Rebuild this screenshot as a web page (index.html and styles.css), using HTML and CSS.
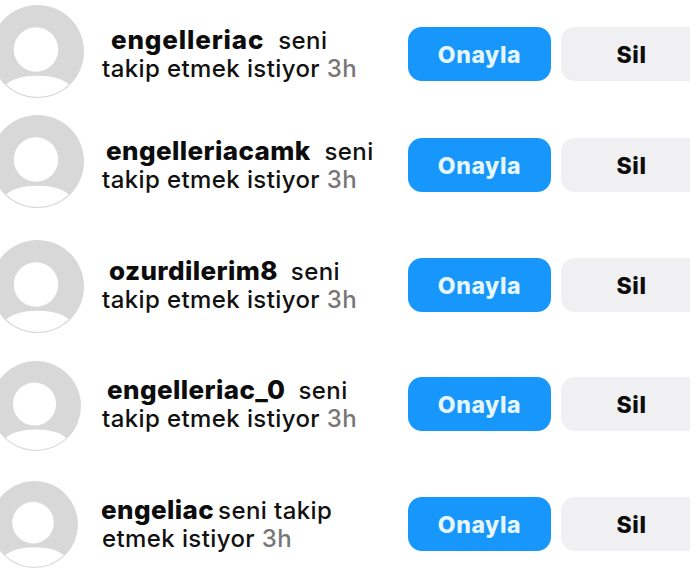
FILE: index.html
```html
<!DOCTYPE html>
<html lang="en">
<head>
    <meta charset="UTF-8">
    <meta name="viewport" content="width=device-width, initial-scale=1.0">
    <title>Takip istekleri</title>
    <link rel="stylesheet" href="styles.css">
</head>
<body>
    <svg class="icon-defs">
        <symbol id="avatar-icon" viewBox="0 0 92 92">
            <circle class="avatar-bg" cx="46" cy="46" r="46"/>
            <circle class="avatar-cut" cx="44.5" cy="44" r="22"/>
            <path class="avatar-cut" d="M15 78.6 C21 73 32 70 46 70 C60 70 71 73 77 78.6 A45 45 0 0 1 15 78.6 Z"/>
        </symbol>
    </svg>

    <div class="request-list">
        <div class="request-row row-1">
            <svg class="avatar avatar-lg avatar-up-2"><use href="#avatar-icon"/></svg>
            <div class="request-text">
                <div class="line-top indent-9"><span class="username username-wide">engelleriac</span><span class="seni">seni</span></div>
                <div class="line-bottom">takip etmek istiyor <span class="time">3h</span></div>
            </div>
            <button class="confirm-btn">Onayla</button>
            <button class="delete-btn">Sil</button>
        </div>
        <div class="request-row row-2">
            <svg class="avatar avatar-lg avatar-up-3"><use href="#avatar-icon"/></svg>
            <div class="request-text">
                <div class="line-top indent-4"><span class="username">engelleriacamk</span><span class="seni">seni</span></div>
                <div class="line-bottom">takip etmek istiyor <span class="time">3h</span></div>
            </div>
            <button class="confirm-btn">Onayla</button>
            <button class="delete-btn">Sil</button>
        </div>
        <div class="request-row row-3">
            <svg class="avatar avatar-lg avatar-down-1"><use href="#avatar-icon"/></svg>
            <div class="request-text">
                <div class="line-top indent-7"><span class="username">ozurdilerim8</span><span class="seni seni-close">seni</span></div>
                <div class="line-bottom">takip etmek istiyor <span class="time">3h</span></div>
            </div>
            <button class="confirm-btn">Onayla</button>
            <button class="delete-btn">Sil</button>
        </div>
        <div class="request-row row-4">
            <svg class="avatar avatar-md avatar-down-2"><use href="#avatar-icon"/></svg>
            <div class="request-text">
                <div class="line-top indent-5"><span class="username">engelleriac_0</span><span class="seni seni-close">seni</span></div>
                <div class="line-bottom">takip etmek istiyor <span class="time">3h</span></div>
            </div>
            <button class="confirm-btn">Onayla</button>
            <button class="delete-btn">Sil</button>
        </div>
        <div class="request-row row-5">
            <svg class="avatar avatar-sm"><use href="#avatar-icon"/></svg>
            <div class="request-text">
                <div class="line-top shift-left"><span class="username">engeliac</span><span class="seni-tight">seni takip</span></div>
                <div class="line-bottom">etmek istiyor <span class="time">3h</span></div>
            </div>
            <button class="confirm-btn">Onayla</button>
            <button class="delete-btn">Sil</button>
        </div>
    </div>
</body>
</html>
```

FILE: styles.css
```css
html, body {
    margin: 0;
    padding: 0;
    height: 573px;
    overflow: hidden;
    background-color: white;
}
body {
    font-family: Inter, "Liberation Sans", sans-serif;
    color: #111;
}
.icon-defs {
    display: none;
}
.request-list {
    display: flex;
    flex-direction: column;
    padding-top: 27px;
}
.request-row {
    display: flex;
    align-items: center;
    height: 54px;
}
.row-2 { margin-top: 57px; }
.row-3 { margin-top: 66px; }
.row-4 { margin-top: 65px; }
.row-5 { margin-top: 66px; }

.avatar {
    flex-shrink: 0;
    margin-left: -9px;
}
.avatar-lg { width: 93px; height: 93px; margin-right: 18px; }
.avatar-md { width: 90px; height: 90px; margin-right: 21px; }
.avatar-sm { width: 87px; height: 87px; margin-right: 24px; }
.avatar-up-2 { margin-top: -5px; }
.avatar-up-3 { margin-top: -7px; }
.avatar-down-1 { margin-top: 2px; }
.avatar-down-2 { margin-top: 3px; }
.avatar-bg { fill: #d8d8d8; }
.avatar-cut { fill: white; }

.request-text {
    width: 306px;
    flex-shrink: 0;
    font-size: 24px;
    font-weight: 500;
    letter-spacing: 0.4px;
    line-height: 28px;
    white-space: nowrap;
}
.line-top { display: flex; align-items: baseline; }
.indent-9 { margin-left: 9px; }
.indent-7 { margin-left: 7px; }
.indent-5 { margin-left: 5px; }
.indent-4 { margin-left: 4px; }
.shift-left { margin-left: -1px; }
.username {
    font-size: 26px;
    font-weight: 800;
    letter-spacing: 0.4px;
    color: #0c0c0c;
}
.username-wide { letter-spacing: 0.85px; }
.seni { margin-left: 14px; }
.seni-close { margin-left: 13px; }
.seni-tight { margin-left: 4px; }
.time { color: #777; }

.confirm-btn, .delete-btn {
    flex-shrink: 0;
    height: 54px;
    padding-top: 2px;
    border: none;
    border-radius: 14px;
    font-family: inherit;
    font-size: 23px;
    font-weight: 800;
    letter-spacing: 0.6px;
    cursor: pointer;
}
.confirm-btn {
    width: 143px;
    background-color: #1797fb;
    color: #e6f6ff;
}
.delete-btn {
    width: 150px;
    margin-left: 10px;
    padding-right: 15px;
    background-color: #f0f0f2;
    color: #0c0c0c;
}
```
